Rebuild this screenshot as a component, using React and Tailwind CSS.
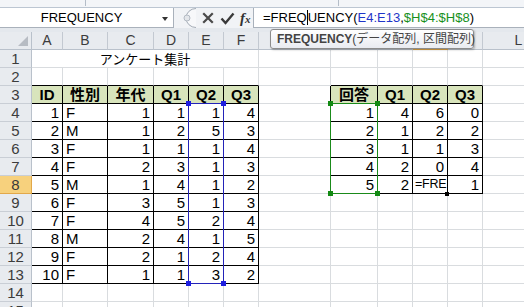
import React from "react";

const T1 = [
  [1, "F", 1, 1, 1, 4],
  [2, "M", 1, 2, 5, 3],
  [3, "F", 1, 1, 1, 4],
  [4, "F", 2, 3, 1, 3],
  [5, "M", 1, 4, 1, 2],
  [6, "F", 3, 5, 1, 3],
  [7, "F", 4, 5, 2, 4],
  [8, "M", 2, 4, 1, 5],
  [9, "F", 2, 1, 2, 4],
  [10, "F", 1, 1, 3, 2],
];
const T2 = [
  [1, 4, 6, 0],
  [2, 1, 2, 2],
  [3, 1, 1, 3],
  [4, 2, 0, 4],
  [5, 2, "EDIT", 1],
];
const LETTERS = ["A", "B", "C", "D", "E", "F", "G", "H", "I", "J", "K", "L"];

function inTable(r, c) {
  if (r >= 3 && r <= 13 && c >= 1 && c <= 6) return true;
  if (r >= 3 && r <= 8 && c >= 8 && c <= 11) return true;
  return false;
}

function getCell(r, c) {
  if (r === 3 && c >= 1 && c <= 6) return { v: ["ID", "性別", "年代", "Q1", "Q2", "Q3"][c - 1], t: "h" };
  if (r >= 4 && r <= 13 && c >= 1 && c <= 6) return { v: T1[r - 4][c - 1], t: c === 2 ? "l" : "r" };
  if (r === 3 && c >= 8 && c <= 11) return { v: ["回答", "Q1", "Q2", "Q3"][c - 8], t: "h" };
  if (r >= 4 && r <= 8 && c >= 8 && c <= 11) {
    const v = T2[r - 4][c - 8];
    if (v === "EDIT") return { v: "=FRE", t: "e" };
    return { v, t: "r" };
  }
  return null;
}

function Cell({ r, c }) {
  const rb = inTable(r, c) || inTable(r, c + 1) ? "border-r-black" : "border-r-[#d9dcdf]";
  const bb = inTable(r, c) || inTable(r + 1, c) ? "border-b-black" : "border-b-[#d9dcdf]";
  const bg = r === 3 && inTable(r, c) ? "bg-[#d8e4bc]" : "bg-white";
  const cell = getCell(r, c);
  let align = "justify-end pr-[3px]";
  let content = null;
  if (cell) {
    if (cell.t === "h") align = "justify-center font-bold";
    else if (cell.t === "l") align = "justify-start pl-[3px]";
    else if (cell.t === "e") align = "justify-start pl-[2px]";
    content =
      cell.t === "e" ? (
        <span className="flex items-center text-[12.5px] tracking-[-0.2px]">
          {cell.v}
          <span className="inline-block w-[1px] h-[14px] bg-black" />
        </span>
      ) : (
        cell.v
      );
  }
  return (
    <div className={`border-r border-b ${rb} ${bb} ${bg} ${align} flex items-center text-[15px] leading-[17px] text-black overflow-visible whitespace-nowrap`}>
      {content}
    </div>
  );
}

function RowHeader({ r }) {
  const hl = r === 8;
  return (
    <div
      className={`flex items-center justify-center border-r border-b text-[15px] leading-[17px] ${
        hl ? "bg-[#f7d17d] border-r-[#e2a84a] border-b-[#e2a84a] text-[#3a3a3a]" : "bg-[#e8ebef] border-r-[#b9c1cb] border-b-[#c9ced5] text-[#3c3c3c]"
      }`}
    >
      {r}
    </div>
  );
}

export default function App() {
  const rows = [];
  for (let r = 1; r <= 15; r++) rows.push(r);
  return (
    <div className="w-[524px] h-[307px] overflow-hidden bg-white relative font-['Liberation_Sans','Noto_Sans_CJK_JP',sans-serif] select-none">
      {/* ribbon bottom strip */}
      <div className="h-[8px] bg-[#f3f5f8] border-b border-[#bcc6d2] flex">
        <div className="w-[86px] h-[6px] border-r border-[#b4bdc8]" />
        <div className="w-[253px] h-[6px] border-r border-[#b4bdc8]" />
      </div>
      {/* formula bar */}
      <div className="h-[20px] flex bg-[#f1f3f6]">
        <div className="w-[174px] h-[20px] bg-white border-r border-b border-[#a9b1bb] flex items-center relative">
          <div className="flex-1 text-center text-[13px] leading-[20px] text-black pr-[14px] pl-[4px]">FREQUENCY</div>
          <div className="absolute right-[5px] top-[9px] w-0 h-0 border-l-[3.5px] border-r-[3.5px] border-t-[4px] border-l-transparent border-r-transparent border-t-[#333]" />
        </div>
        <div className="w-[24px] h-[20px] flex items-center">
          <svg width="24" height="20" viewBox="0 0 24 20">
            <path d="M22 0.5 A10 9.5 0 0 0 22 19.5" fill="#f7f8fa" stroke="#a3abb5" strokeWidth="1" />
            <circle cx="13" cy="10" r="3" fill="#e3e6ea" stroke="#b3bac3" strokeWidth="1" />
          </svg>
        </div>
        <div className="w-[55px] h-[20px] flex items-center">
          <svg width="12" height="12" viewBox="0 0 12 12" className="ml-[4px]">
            <path d="M2 2 L10 10 M10 2 L2 10" stroke="#4a4a4a" strokeWidth="2.2" strokeLinecap="square" />
          </svg>
          <svg width="15" height="13" viewBox="0 0 15 13" className="ml-[6px]">
            <path d="M1.5 6.5 L5.5 11 L13.5 1.5" stroke="#3a3a3a" strokeWidth="2.4" fill="none" />
          </svg>
          <span className="ml-[5px] font-['Liberation_Serif',serif] italic font-bold text-[15px] leading-[20px] text-[#333]">
            f<span className="text-[11px]">x</span>
          </span>
        </div>
        <div className="flex-1 h-[20px] bg-white border-l border-b border-[#a9b1bb] flex items-center pl-[9px] text-[13px] leading-[20px] text-black whitespace-nowrap">
          <span>=FREQ</span>
          <span className="inline-block w-[1px] h-[15px] bg-black" />
          <span>UENCY(</span>
          <span className="text-[#1f35c8]">E4:E13</span>
          <span>,</span>
          <span className="text-[#17901d]">$H$4:$H$8</span>
          <span>)</span>
        </div>
      </div>
      <div className="h-[4px] bg-[#e4e8ed]" />
      {/* grid */}
      <div className="relative">
        <div className="grid grid-cols-[32px_31px_45px_46px_35px_35px_35px_72px_47px_35px_35px_35px_72px] auto-rows-[18px]">
          {/* column header row */}
          <div className="bg-[#e8ebef] border-r border-b border-r-[#b9c1cb] border-b-[#b9c1cb] flex items-end justify-end pr-[3px] pb-[3px]">
            <svg width="10" height="10" viewBox="0 0 10 10">
              <path d="M10 0 L10 10 L0 10 Z" fill="#b7bcc3" />
            </svg>
          </div>
          {LETTERS.map((l, i) => (
            <div
              key={l}
              className={`flex items-center justify-center border-r border-b text-[14px] leading-[17px] ${
                i === 9 ? "bg-[#f7d17d] border-r-[#e2a84a] border-b-[#e2a84a] text-[#333]" : "bg-[#e8ebef] border-r-[#c3c9d1] border-b-[#b9c1cb] text-[#3c3c3c]"
              }`}
            >
              {l}
            </div>
          ))}
          {rows.map((r) => (
            <React.Fragment key={r}>
              <RowHeader r={r} />
              {r === 1 ? (
                <>
                  <div className="col-span-6 border-r border-b border-r-[#d9dcdf] border-b-[#d9dcdf] flex items-center justify-center text-[13px] leading-[17px] text-black font-['Noto_Sans_CJK_JP',sans-serif]">
                    アンケート集計
                  </div>
                  {[7, 8, 9, 10, 11, 12].map((c) => (
                    <Cell key={c} r={r} c={c} />
                  ))}
                </>
              ) : (
                [1, 2, 3, 4, 5, 6, 7, 8, 9, 10, 11, 12].map((c) => <Cell key={c} r={r} c={c} />)
              )}
            </React.Fragment>
          ))}
        </div>

        {/* blue reference range E4:E13 */}
        <div className="absolute left-[188px] top-[71px] w-[36px] h-[181px] border border-[#2323b8] pointer-events-none" />
        <div className="absolute left-[186px] top-[69px] w-[5px] h-[5px] bg-[#1e1ee0]" />
        <div className="absolute left-[221px] top-[69px] w-[5px] h-[5px] bg-[#1e1ee0]" />
        <div className="absolute left-[186px] top-[249px] w-[5px] h-[5px] bg-[#1e1ee0]" />
        <div className="absolute left-[221px] top-[249px] w-[5px] h-[5px] bg-[#1e1ee0]" />

        {/* green reference range H4:H8 */}
        <div className="absolute left-[330px] top-[71px] w-[48px] h-[91px] border border-[#1a8a1a] pointer-events-none" />
        <div className="absolute left-[328px] top-[69px] w-[5px] h-[5px] bg-[#138a13]" />
        <div className="absolute left-[375px] top-[69px] w-[5px] h-[5px] bg-[#138a13]" />
        <div className="absolute left-[328px] top-[159px] w-[5px] h-[5px] bg-[#138a13]" />
        <div className="absolute left-[375px] top-[159px] w-[5px] h-[5px] bg-[#138a13]" />

        {/* active cell J8 */}
        <div className="absolute left-[412px] top-[143px] w-[36px] h-[19px] border border-black pointer-events-none" />
        <div className="absolute left-[445px] top-[160px] w-[4px] h-[4px] bg-black" />
      </div>

      {/* function tooltip */}
      <div className="absolute left-[270px] top-[29px] w-[204px] h-[20px] rounded-[3px] border border-[#8c8c8c] bg-gradient-to-b from-white to-[#e9ebf1] shadow-[1px_1px_2px_rgba(0,0,0,0.25)] flex items-center pl-[6px] text-[12px] leading-[18px] text-[#444] whitespace-nowrap">
        <span className="font-bold">FREQUENCY</span>
        <span className="font-['Liberation_Sans','Noto_Sans_CJK_JP',sans-serif]">(データ配列, 区間配列)</span>
      </div>
    </div>
  );
}
